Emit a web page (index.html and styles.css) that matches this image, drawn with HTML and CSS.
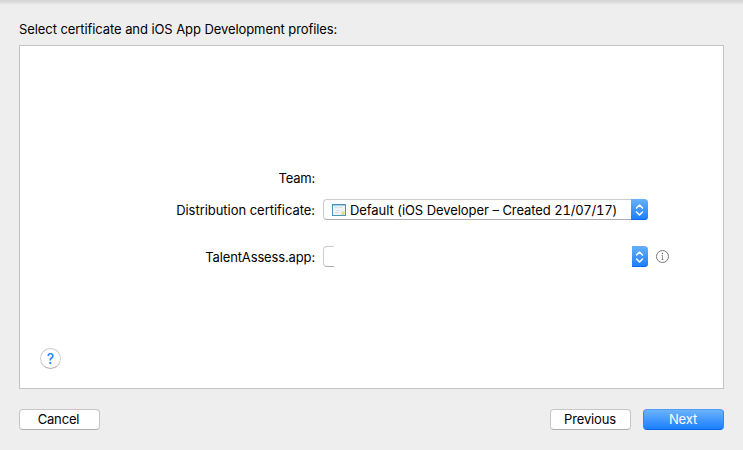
FILE: index.html
```html
<!DOCTYPE html>
<html lang="en">
<head>
<meta charset="utf-8">
<title>Select certificate</title>
<link rel="stylesheet" href="styles.css">
</head>
<body>
<main class="sheet">
  <h1 class="heading"><span>Select certificate and iOS App Development profiles:</span></h1>
  <section class="panel">
    <div class="form">
      <div class="row team"><span class="label team-label">Team:</span></div>
      <div class="row cert">
        <span class="label cert-label">Distribution certificate:</span>
        <div class="popup">
          <svg class="cert-icon" width="14" height="12" viewBox="0 0 14 12">
            <rect x=".5" y=".5" width="13" height="11" fill="#edf3f6" stroke="#4b93bf"/>
            <path d="M1 1.500h12" stroke="#a5cce3"/>
            <path d="M3 3.500h3m1 0h3M4 6.500h3m1 0h1M3 8.500h4" stroke="#d2dce2"/>
            <circle cx="11" cy="8.800" r="1.600" fill="#e6dc68"/>
            <path d="M9.500 10.500h3" stroke="#d6e29a"/>
          </svg>
          <span class="value">Default (iOS Developer – Created <span class="date">21/07/17)</span></span>
          <span class="stepper wide"><svg width="9" height="12" viewBox="0 0 9 12"><path d="M1.500 4l3-3 3 3M1.500 8l3 3 3-3"/></svg></span>
        </div>
      </div>
      <div class="row app">
        <span class="label app-label">TalentAssess.app:</span>
        <div class="popup-empty">
          <span class="stub"></span>
          <span class="stepper"><svg width="8" height="12" viewBox="0 0 8 12"><path d="M.500 4l3-3 3 3M.500 8l3 3 3-3"/></svg></span>
        </div>
        <svg class="info" width="14" height="14" viewBox="0 0 14 14">
          <circle cx="6.500" cy="6.500" r="6" fill="none" stroke="#777"/>
          <path d="M5.500 5.500h1v4.300M5.500 9.500h2" fill="none" stroke="#777" stroke-width=".8"/>
          <circle cx="6.500" cy="3.500" r=".7" fill="#666"/>
        </svg>
      </div>
    </div>
    <button class="help">?</button>
  </section>
  <footer class="actions">
    <button class="btn cancel">Cancel</button>
    <button class="btn previous">Previous</button>
    <button class="btn primary">Next</button>
  </footer>
</main>
</body>
</html>
```
FILE: styles.css
```css
* { box-sizing: border-box; }
body {
  margin: 0;
  font: 13px/16px Inter, "Liberation Sans", sans-serif;
  color: #000;
}
.sheet {
  width: 743px;
  height: 450px;
  padding: 21px 19px 0;
  background: linear-gradient(#d3d3d3, #e1e1e1 3px, #eee 5px);
}
.heading {
  margin: 0 0 8px;
  font: inherit;
  letter-spacing: -.08px;
  white-space: nowrap;
}
.panel {
  display: flex;
  flex-direction: column;
  justify-content: space-between;
  height: 344px;
  padding: 124px 20px 19px;
  border: 1px solid #c4c4c4;
  background: #fff;
}
.row {
  display: grid;
  grid-template-columns: 275px 325px 14px;
  column-gap: 8px;
  align-items: center;
  height: 21px;
  white-space: nowrap;
}
.team { height: 16px; }
.cert { margin-top: 13px; }
.app { margin-top: 26px; }
.label { justify-self: end; }
.team-label { letter-spacing: -.2px; }
.cert-label { letter-spacing: -.04px; }
.app-label { letter-spacing: -.14px; }
.popup {
  display: flex;
  align-items: center;
  height: 21px;
  padding-left: 8px;
  border: 1px solid #ccc;
  border-right: 0;
  border-bottom-color: #adadad;
  border-radius: 4px;
}
.value { margin-left: 4px; flex: 1; letter-spacing: -.07px; }
.date { font-variant-numeric: tabular-nums; letter-spacing: -.25px; }
.stepper {
  display: flex;
  align-items: center;
  justify-content: center;
  width: 16px;
  height: 21px;
  border-radius: 0 4px 4px 0;
  background: linear-gradient(#67b0fb, #1a7dff);
  box-shadow: inset 0 -1px #0a6cf0;
}
.wide { width: 17px; }
.stepper path {
  fill: none;
  stroke: #fff;
  stroke-width: 1.5;
  stroke-linecap: round;
  stroke-linejoin: round;
}
.popup-empty { display: flex; justify-content: space-between; }
.stub {
  width: 11px;
  height: 21px;
  border: 1px solid #ccc;
  border-right: 0;
  border-bottom-color: #adadad;
  border-radius: 4px 0 0 4px;
}
.help {
  width: 21px;
  height: 21px;
  padding: 0;
  border: 1px solid #cdcdcd;
  border-bottom-color: #b0b0b0;
  border-radius: 50%;
  background: #fff;
  color: #1484ff;
  font: 500 14px/19px Inter, sans-serif;
}
.actions { display: flex; margin-top: 20px; }
.btn {
  width: 81px;
  height: 21px;
  padding: 0;
  border: 1px solid #c6c6c6;
  border-bottom-color: #adadad;
  border-radius: 4px;
  background: #fff;
  color: #000;
  font: 13px/19px Inter, sans-serif;
  letter-spacing: -.15px;
}
.cancel { padding-right: 2px; }
.previous { margin-left: auto; padding-right: 1px; }
.primary {
  margin-left: 12px;
  padding-right: 1px;
  border-color: #4d9ff5 #2f87f5 #0a66e8;
  background: linear-gradient(#6bb3fa, #1a7fff);
  color: #fff;
}
```
